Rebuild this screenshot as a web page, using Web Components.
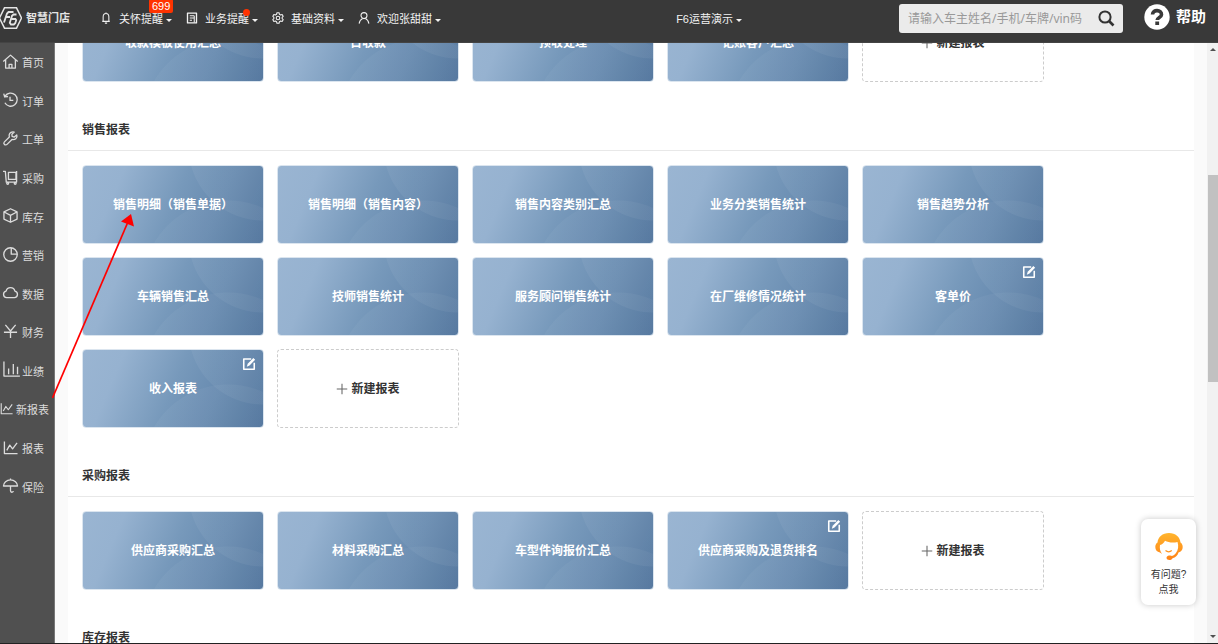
<!DOCTYPE html>
<html lang="zh-CN">
<head>
<meta charset="utf-8">
<title>智慧门店</title>
<style>
html, body { margin: 0; height: 100%; }
body { font: 12px/16px "Liberation Sans", "Noto Sans CJK SC", sans-serif; color: #333; background: #fafafa; overflow: hidden; }
</style>
</head>
<body>
<store-app></store-app>
<script>
const ICONS = {
  bell: '<path d="M3 12.500h10M4.200 12V6.500a3.800 4.500 0 0 1 7.600 0V12M8 .5v1.800M6.500 14.800h3"/>',
  doc: '<path d="M2 1.500h12v13H2z" stroke-width="1.800"/><path d="M5 5h6M5 8h6M5 11h3M11 14V5"/>',
  gear: '<path d="M6.600 1h2.800l.5 2 1.600.9 2-.6 1.400 2.400L13.500 7.200v1.600l1.400 1.500-1.400 2.400-2-.6-1.600.9-.5 2H6.600l-.5-2-1.600-.9-2 .6-1.400-2.400L2.500 8.800V7.200L1.100 5.700l1.400-2.400 2 .6 1.600-.9z"/><circle cx="8" cy="8" r="2.400"/>',
  user: '<circle cx="8" cy="4.800" r="4"/><path d="M1.500 15.500C2 11.500 4 9.600 6.200 8.600M14.500 15.500c-.5-4-2.500-5.900-4.700-6.900"/>',
  home: '<path d="M.3 8 8 1.200 15.700 8M2.800 6v9h10.400V6M6.500 14.500v-3.500h3v3.500"/>',
  order: '<path d="M2.200 4.500A7 7 0 1 1 2 11.500M.8 1.800l1 3.500 3.600-.5M7.500 5v4h3.500"/>',
  tool: '<path d="M14.700 4.200 12 6.500 9.700 5.800 9.500 3.500 12 1.200C9.500.4 7 1.800 6.600 4.200c-.1.800 0 1.500.2 2.200L1.500 11.600a1.800 1.800 0 0 0 2.800 2.700l5.300-5.300c3 1 6.200-1.500 5.100-4.800z"/>',
  cart: '<path d="M0 1.500h2.500L3.500 13H15M5.800 2.500h8v7.500h-8zM14.500 1v12"/><circle cx="5" cy="14.200" r="1"/><circle cx="13" cy="14.200" r="1"/>',
  box: '<path d="M8 .8l7 3.400v7.600l-7 3.400-7-3.400V4.200zM1.200 4.300 8 7.800l6.800-3.500M8 7.800V15"/>',
  pie: '<circle cx="8" cy="8" r="7.200"/><path d="M8.800 1v6.600h6.200"/>',
  cloud: '<path d="M3.800 13.500a3.500 3.500 0 0 1-.5-6.900 4.800 4.800 0 0 1 9.400 0 3.500 3.500 0 0 1-.5 6.900z"/>',
  yen: '<path d="M2.500 1 8 7.500 13.500 1M1 8.800h14M8 7.500V15"/>',
  bars: '<path d="M1-.5V15h17M6 7v6M11 2v11M15.500 5v8"/>',
  line: '<path d="M1.500 1.500v13H15.500M4 11l3.200-5.500 3 4L15 3"/>',
  umbrella: '<path d="M.5 8.500a7.500 6.500 0 0 1 15 0zM8 .5V2M8 8.500v5.200c0 2 2.800 2 3 .2"/>',
  plus: '<path d="M8 1v14M1 8h14"/>',
  edit: '<path d="M10.500 2.200H2v11.800h12V6.500" stroke-width="1.800"/><path d="M13 1.200l2 2L8.600 9.600 5.500 11l1-3.300z" fill="currentColor" stroke="none"/>',
  search: '<circle cx="7" cy="7" r="5.600" stroke-width="2"/><path d="M11 11 15.500 15.500" stroke-width="2.600"/>'
};

function define(name, css, html) {
  customElements.define(name, class extends HTMLElement {
    connectedCallback() {
      if (this.shadowRoot) return;
      const root = this.attachShadow({ mode: 'open' });
      const body = typeof html === 'function' ? html(this) : html;
      root.innerHTML = `<style>*{box-sizing:border-box}button{font:inherit;color:inherit;background:none;border:0;padding:0;margin:0;cursor:pointer}a{color:inherit;text-decoration:none}${css}</style>${body}`;
    }
  });
}

define('ui-icon',
  ':host{display:block;flex:none;width:var(--icon,16px);height:var(--icon,16px)}svg{display:block;width:100%;height:100%;overflow:visible}',
  el => `<svg viewBox="0 0 16 16" fill="none" stroke="currentColor" stroke-width="1.400" stroke-linejoin="round" aria-hidden="true">${ICONS[el.getAttribute('name')]}</svg>`);

define('brand-logo',
  ':host{display:flex;align-items:center;gap:4px;width:100px;flex:none;color:#e4e4e4;font-size:11px;font-weight:700}svg{display:block;flex:none}',
  `<svg width="22" height="24" viewBox="0 0 22 24" fill="none" stroke="currentColor" stroke-width="1.500" aria-hidden="true">
    <path d="M-.5 12 4.500 1.800h12L21.500 12l-5 10.200h-12z"/>
    <path d="M4 16.500 7 7.500l1.500-1.500h5M6 11h4" stroke-width="1.800"/>
    <path d="M16.500 8.500h-3l-1.500 1.300-2.200 7 1.200 1.700h2.800l1.400-1.300 1-3-.8-1.200h-3.600" stroke-width="1.800"/>
  </svg><slot></slot>`);

define('nav-menu',
  `:host{display:block;flex:none;font-size:11px;line-height:16px;color:#f2f2f2}
   button{position:relative;display:flex;align-items:center;padding-top:1px;--icon:12px}
   ui-icon{margin-right:7px;margin-bottom:2px}
   .caret{margin:3px 0 0 3px;border:3px solid transparent;border-top-color:currentColor;border-bottom:0}
   .count,.dot{position:absolute;background:#ff3300}
   .count{left:49px;top:-11px;padding:0 3px;height:14px;line-height:14px;border-radius:2px;color:#fff}
   .dot{left:57px;top:-1px;width:7px;height:7px;border-radius:50%}`,
  el => {
    const i = el.getAttribute('icon'), c = el.getAttribute('count');
    return `<button type="button" aria-haspopup="menu">${i ? `<ui-icon name="${i}"></ui-icon>` : ''}<slot></slot><span class="caret"></span>${c ? `<span class="count">${c}</span>` : ''}${el.hasAttribute('dot') ? '<span class="dot"></span>' : ''}</button>`;
  });

define('search-box',
  `:host{display:block;flex:none;width:224px}
   form{display:flex;align-items:center;height:29px;padding:0 9px;background:#ebebeb;border-radius:3px;margin:0}
   input{flex:1;min-width:0;border:0;outline:0;background:none;padding:0;font:12px "Noto Sans","Noto Sans CJK SC",sans-serif;color:#333}
   input::placeholder{color:#999;opacity:1}
   button{color:#333;--icon:16px}`,
  `<form onsubmit="return false"><input type="text" aria-label="搜索" placeholder="请输入车主姓名/手机/车牌/vin码"><button type="submit" aria-label="搜索"><ui-icon name="search"></ui-icon></button></form>`);

define('help-link',
  `:host{display:block;flex:none}
   a{display:flex;align-items:center;gap:6px;color:#fff;font-size:15px;line-height:26px;font-weight:700}
   svg{display:block}`,
  `<a href="#help"><svg width="26" height="26" viewBox="0 0 26 26" aria-hidden="true"><circle cx="13" cy="13" r="12.700" fill="#fff"/><path d="M8.500 10.500c.2-5.500 9.200-5 9 .2-.1 2.800-4.200 2.700-4.300 5.300" fill="none" stroke="#393939" stroke-width="3.600"/><path d="M11.300 17.500h3.800v3.500h-3.800z" fill="#393939"/></svg><slot></slot></a>`);

define('top-bar',
  `:host{display:flex;align-items:center;flex:none;height:43px;padding:0 12px 6px 0;background:#393939;border-bottom:1px solid #444}
   nav{display:flex;gap:14px}
   .shop{margin-left:auto}
   search-box{margin-left:157px}
   help-link{margin-left:21px;margin-bottom:2px}`,
  `<brand-logo>智慧门店</brand-logo>
   <nav><nav-menu icon="bell" count="699">关怀提醒</nav-menu><nav-menu icon="doc" dot>业务提醒</nav-menu><nav-menu icon="gear">基础资料</nav-menu><nav-menu icon="user">欢迎张甜甜</nav-menu></nav>
   <nav-menu class="shop">F6运营演示</nav-menu>
   <search-box></search-box><help-link>帮助</help-link>`);

define('side-item',
  `:host{display:flex;flex:1}
   a{display:flex;align-items:center;width:100%;gap:4px;padding-left:3px;font-size:11px;color:#dcdcdc;white-space:nowrap}
   ui-icon{margin-bottom:4px;--icon:15px}
   :host([wide]) a{padding-left:0;gap:3px}
   :host([wide]) ui-icon{--icon:13px}`,
  el => `<a href="#${el.getAttribute('icon')}"><ui-icon name="${el.getAttribute('icon')}"></ui-icon><slot></slot></a>`);

define('side-bar',
  `:host{display:block;flex:none;width:55px;background:#505050;border-right:1px solid #777}
   nav{display:flex;flex-direction:column;height:464px;padding-top:1px}`,
  `<nav>${[['home', '首页'], ['order', '订单'], ['tool', '工单'], ['cart', '采购'], ['box', '库存'], ['pie', '营销'], ['cloud', '数据'], ['yen', '财务'], ['bars', '业绩'], ['line', '新报表', 'wide'], ['line', '报表'], ['umbrella', '保险']]
    .map(([i, t, w]) => `<side-item icon="${i}" ${w || ''}>${t}</side-item>`).join('')}</nav>`);

define('report-card',
  `:host{display:block;height:79px}
   a{position:relative;display:flex;align-items:center;justify-content:center;height:100%;border:1px solid #dbe5ef;border-radius:4px;color:#fff;font-weight:700;
     background:radial-gradient(circle 75px at 180px -20px,rgba(255,255,255,.05) 74px,transparent 75px),radial-gradient(circle 86px at 145px 120px,rgba(255,255,255,.04) 85px,transparent 86px),linear-gradient(113deg,#9ab5d2 0%,#96b2d0 20%,#7799bb 50%,#688bb0 72%,#50749c 100%)}
   ui-icon{position:absolute;right:7px;top:7px;--icon:14px}`,
  el => `<a href="#report"><slot></slot>${el.hasAttribute('editable') ? '<ui-icon name="edit"></ui-icon>' : ''}</a>`);

define('new-report',
  `:host{display:block;height:79px}
   button{display:flex;align-items:center;justify-content:center;gap:3px;width:100%;height:100%;border:1px dashed #ccc;border-radius:4px;font-weight:700;color:#333;--icon:12px}
   ui-icon{color:#666}`,
  '<button type="button"><ui-icon name="plus"></ui-icon><slot>新建报表</slot></button>');

define('report-section',
  `:host{display:block}
   h2{margin:0;padding:40px 14px 12px;font-size:12px;line-height:16px;font-weight:700;border-bottom:1px solid #e8e8e8}
   .grid{display:grid;grid-template-columns:repeat(auto-fill,182px);gap:13px;padding:14px 14px 0}`,
  el => `${el.hasAttribute('heading') ? `<h2>${el.getAttribute('heading')}</h2>` : ''}<div class="grid"><slot></slot></div>`);

define('scroll-rail',
  `:host{display:flex;flex-direction:column;align-items:center;flex:none;width:11px;padding:5px 0;background:#f1f1f1}
   i{border:3px solid transparent}
   .up{border-bottom-color:#505050;border-top:0}
   .down{border-top-color:#505050;border-bottom:0;margin-top:auto}
   .thumb{width:10px;height:207px;margin-top:124px;background:#c1c1c1;align-self:flex-end}`,
  '<i class="up"></i><span class="thumb"></span><i class="down"></i>');

define('support-card',
  `:host{position:absolute;right:22px;bottom:38px;width:55px}
   button{display:flex;flex-direction:column;align-items:center;width:100%;height:86px;padding-top:12px;border-radius:7px;background:#fff;box-shadow:0 0 6px rgba(0,0,0,.22);font-size:10px;line-height:15px;color:#333}
   svg{display:block;margin-bottom:5px}`,
  `<button type="button"><svg width="30" height="31" viewBox="0 0 30 31" aria-hidden="true">
     <defs><linearGradient id="g" x1="0" y1="0" x2="0" y2="1"><stop offset="0" stop-color="#ffb52e"/><stop offset="1" stop-color="#ff8216"/></linearGradient></defs>
     <path fill="url(#g)" d="M15 2C8.500 2 4 6 3.500 11.500 2 12.500 1.300 14 1.300 16c0 3 1.700 5 4.700 5.500l2 1.500C6 20 5.500 17.500 6 14c2-.5 4-2 5-4.200 3.500 1.800 8 2.200 12.500 1.200 1.300 4 .8 8-1.700 11.300-1 1.300-2.300 2.200-3.800 2.700-.8-.8-5.500-.8-5.500 1.800 0 3 5.500 2.800 6 .5 3-.8 5-2.600 6-5.800 2.700-.7 4.200-2.500 4.200-5.500 0-2-.7-3.500-2.200-4.500C26 6 21.500 2 15 2z"/>
     <path d="M11.500 19.500c1.800 1.500 4.500 1.500 6.300 0" fill="none" stroke="#ff9420" stroke-width="1.200"/></svg><slot></slot></button>`);

define('pointer-arrow',
  ':host{position:absolute;left:52px;top:214px;pointer-events:none}svg{display:block}',
  '<svg width="84" height="186" viewBox="0 0 84 186" aria-hidden="true"><path d="M.5 184 75.500 9" stroke="#f00" stroke-width="1.700"/><path d="M79 0 69 7.500 82 12.500z" fill="#f00"/></svg>');

define('store-app',
  `:host{display:flex;flex-direction:column;height:100vh;position:relative;overflow:hidden;border-bottom:1px solid #222;box-sizing:border-box}
   .body{display:flex;flex:1;min-height:0}
   main{flex:1;min-width:0;overflow:hidden;padding:0 13px;background:#fafafa}
   .sheet{display:flow-root;min-height:100%;background:#fff}
   .first{margin-top:-54px}`,
  () => {
    const cards = list => list.map(t => t.endsWith('*') ? `<report-card editable>${t.slice(0, -1)}</report-card>` : `<report-card>${t}</report-card>`).join('') + '<new-report></new-report>';
    return `<top-bar></top-bar><div class="body"><side-bar></side-bar><main><div class="sheet">
      <report-section class="first">${cards(['收款模板使用汇总', '日收款', '预收处理', '记账客户汇总'])}</report-section>
      <report-section heading="销售报表">${cards(['销售明细（销售单据）', '销售明细（销售内容）', '销售内容类别汇总', '业务分类销售统计', '销售趋势分析', '车辆销售汇总', '技师销售统计', '服务顾问销售统计', '在厂维修情况统计', '客单价*', '收入报表*'])}</report-section>
      <report-section heading="采购报表">${cards(['供应商采购汇总', '材料采购汇总', '车型件询报价汇总', '供应商采购及退货排名*'])}</report-section>
      <report-section heading="库存报表"></report-section>
    </div></main><scroll-rail></scroll-rail></div>
    <support-card>有问题?<br>点我</support-card><pointer-arrow></pointer-arrow>`;
  });
</script>
</body>
</html>
